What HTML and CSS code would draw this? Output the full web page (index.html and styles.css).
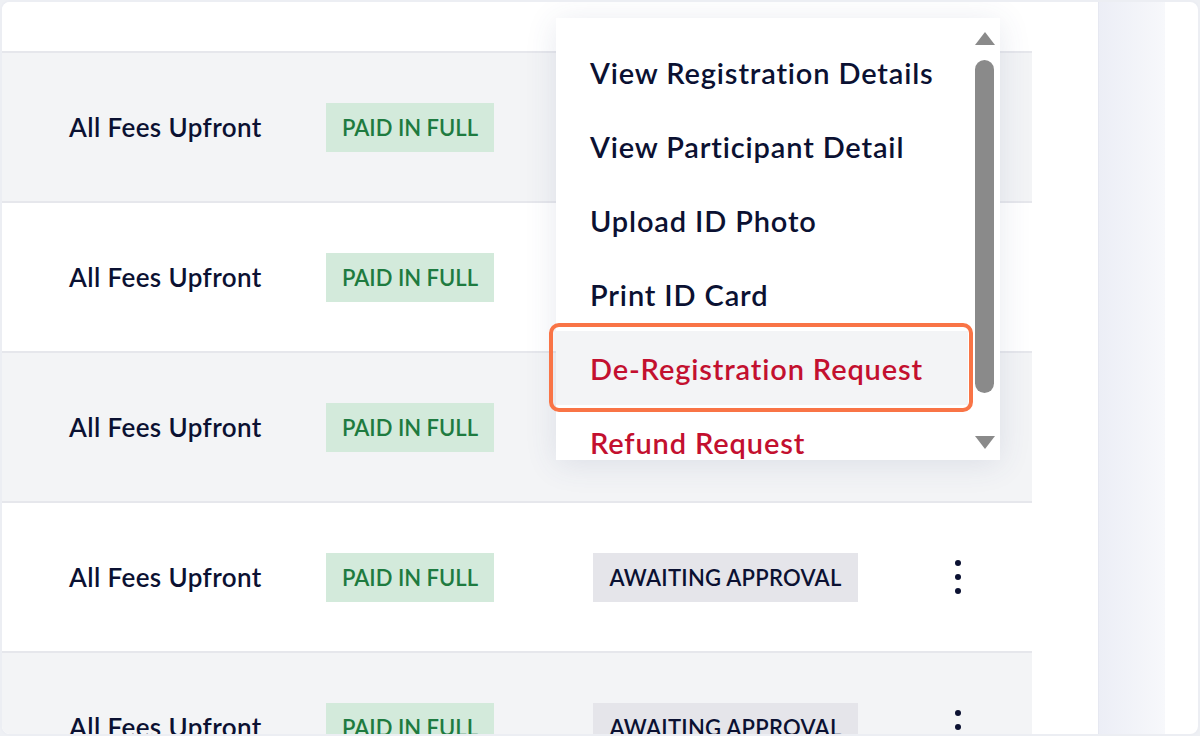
FILE: index.html
```html
<!DOCTYPE html>
<html>
<head>
<meta charset="utf-8">
<link rel="stylesheet" href="styles.css">
</head>
<body>
<div class="frame">
  <div class="table-area">
    <div class="rows">
      <div class="row">
        <div class="c-plan">All Fees Upfront</div>
        <div class="c-pay"><span class="badge paid">PAID IN FULL</span></div>
        <div class="c-status"><span class="badge paid">APPROVED</span></div>
        <div class="c-act"></div>
      </div>
      <div class="row alt">
        <div class="c-plan">All Fees Upfront</div>
        <div class="c-pay"><span class="badge paid">PAID IN FULL</span></div>
        <div class="c-status"></div>
        <div class="c-act"></div>
      </div>
      <div class="row">
        <div class="c-plan">All Fees Upfront</div>
        <div class="c-pay"><span class="badge paid">PAID IN FULL</span></div>
        <div class="c-status"></div>
        <div class="c-act"></div>
      </div>
      <div class="row alt">
        <div class="c-plan">All Fees Upfront</div>
        <div class="c-pay"><span class="badge paid">PAID IN FULL</span></div>
        <div class="c-status"></div>
        <div class="c-act"></div>
      </div>
      <div class="row">
        <div class="c-plan">All Fees Upfront</div>
        <div class="c-pay"><span class="badge paid">PAID IN FULL</span></div>
        <div class="c-status"><span class="badge wait">AWAITING APPROVAL</span></div>
        <div class="c-act"><span class="kebab"><i></i><i></i><i></i></span></div>
      </div>
      <div class="row alt">
        <div class="c-plan">All Fees Upfront</div>
        <div class="c-pay"><span class="badge paid">PAID IN FULL</span></div>
        <div class="c-status"><span class="badge wait">AWAITING APPROVAL</span></div>
        <div class="c-act"><span class="kebab"><i></i><i></i><i></i></span></div>
      </div>
    </div>
  </div>
  <div class="gap"></div>
  <div class="side-strip"></div>
  <div class="side-end"></div>

  <div class="menu">
    <ul class="menu-list">
      <li class="item">View Registration Details</li>
      <li class="item">View Participant Detail</li>
      <li class="item">Upload ID Photo</li>
      <li class="item">Print ID Card</li>
      <li class="item danger active">De-Registration Request</li>
      <li class="item danger">Refund Request</li>
    </ul>
    <div class="scrollbar">
      <span class="arrow up"></span>
      <span class="thumb"></span>
      <span class="arrow down"></span>
    </div>
  </div>
</div>
</body>
</html>
```

FILE: styles.css
```css
* { box-sizing: border-box; }
html, body { margin: 0; padding: 0; }
body {
  width: 1200px;
  height: 736px;
  overflow: hidden;
  background: #eef0f4;
  font-family: Lato, "Open Sans", "Liberation Sans", sans-serif;
  color: #0b1132;
}
.frame {
  position: relative;
  width: 1200px;
  height: 736px;
  display: flex;
  background: #fff;
  border: 2px solid #eceef3;
  border-radius: 10px;
  overflow: hidden;
}
.table-area {
  width: 1030px;
  flex: none;
  overflow: hidden;
}
.rows {
  margin-top: -99px;
}
.row {
  height: 150px;
  display: flex;
  align-items: center;
  background: #fff;
  border-bottom: 2px solid #e6e7ec;
}
.row.alt { background: #f3f4f6; }
.c-plan {
  width: 324px;
  padding-left: 67px;
  font-size: 26px;
  font-weight: 600;
  letter-spacing: 0.4px;
}
.c-pay { width: 267px; }
.c-status { width: 340px; }
.c-act { flex: 1; }
.badge {
  display: inline-flex;
  align-items: center;
  height: 49px;
  padding: 0 8px;
  font-size: 22px;
  font-weight: 600;
  letter-spacing: 0;
}
.badge.paid {
  background: #d3eadb;
  color: #1e7b40;
  width: 168px;
  justify-content: center;
}
.badge.wait {
  background: #e5e5ea;
  color: #0b1132;
  width: 265px;
  justify-content: center;
  letter-spacing: 0.25px;
}
.kebab {
  display: flex;
  flex-direction: column;
  gap: 8px;
  width: 6px;
  margin-left: 22px;
}
.kebab i {
  display: block;
  width: 6px;
  height: 6px;
  border-radius: 50%;
  background: #0b1132;
}
.gap { width: 66px; flex: none; }
.side-strip {
  width: 67px;
  flex: none;
  background: linear-gradient(90deg, #eceef6, #f7f8fb);
  border-left: 1px solid #e6e8f1;
}
.side-end { flex: 1; }

.menu {
  position: absolute;
  left: 554px;
  top: 16px;
  width: 444px;
  height: 442px;
  background: #fff;
  display: flex;
  box-shadow: 0 4px 30px rgba(60, 70, 120, 0.12);
}
.menu-list {
  list-style: none;
  margin: 0;
  padding: 17px 0 0;
  width: 412px;
  flex: none;
}
.item {
  position: relative;
  height: 74px;
  display: flex;
  align-items: center;
  padding-left: 34px;
  font-size: 29px;
  font-weight: 600;
  color: #0b1132;
  letter-spacing: 0.85px;
}
.item.danger { color: #c3102f; }
.item.active { background: #f3f4f6; }
.item.active::after {
  content: "";
  position: absolute;
  left: -7px;
  right: -5px;
  top: -8px;
  bottom: -7px;
  border: 4px solid #f97446;
  border-radius: 10px;
}
.scrollbar {
  flex: 1;
  position: relative;
  display: flex;
  flex-direction: column;
  align-items: center;
  padding: 14px 0 0 1px;
}
.arrow {
  width: 0;
  height: 0;
  border-left: 10px solid transparent;
  border-right: 10px solid transparent;
}
.arrow.up { border-bottom: 13px solid #8a8a8a; }
.arrow.down { border-top: 13px solid #8a8a8a; margin-top: 43px; }
.thumb {
  width: 19px;
  height: 333px;
  margin-top: 15px;
  background: #8a8a8a;
  border-radius: 10px;
}
```
